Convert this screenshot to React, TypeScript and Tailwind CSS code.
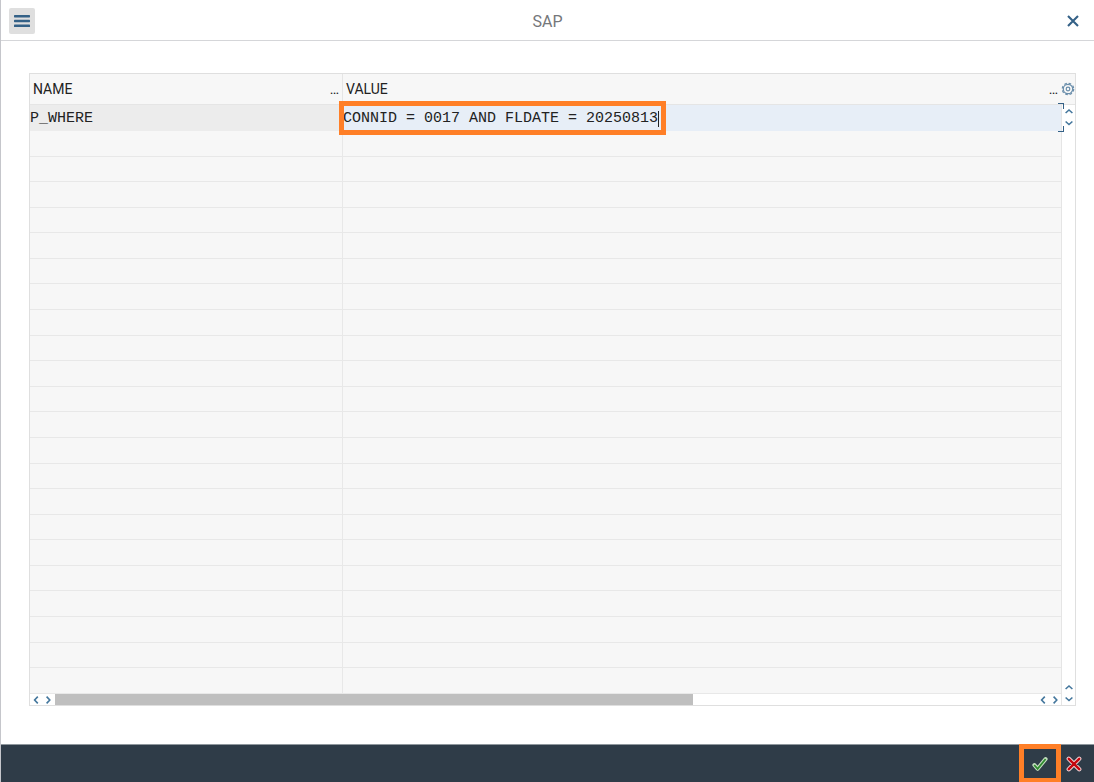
import { useState } from "react";

type Direction = "up" | "down" | "left" | "right";

const chevrons: Record<Direction, string> = {
  up: "M2.6 8 L6 5 L9.4 8",
  down: "M2.6 4.5 L6 7.5 L9.4 4.5",
  left: "M7.8 2.6 L4.6 6 L7.8 9.4",
  right: "M4.6 2.6 L7.8 6 L4.6 9.4",
};

function ScrollButton({ direction }: { direction: Direction }) {
  return (
    <button type="button" aria-label={`Scroll ${direction}`} className="flex size-3 items-center justify-center">
      <svg viewBox="0 0 12 12" className="size-3" fill="none" stroke="#44779d" strokeWidth="1.6">
        <path d={chevrons[direction]} />
      </svg>
    </button>
  );
}

function GearIcon() {
  return (
    <svg viewBox="0 0 14 14" className="size-[14px] shrink-0" fill="none" stroke="#6a8eab">
      <circle cx="7" cy="7" r="4.7" strokeWidth="1.2" />
      <circle cx="7" cy="7" r="5.7" strokeWidth="1.2" strokeDasharray="2.6 1.877" />
      <circle cx="7" cy="7" r="1.8" strokeWidth="1.2" />
    </svg>
  );
}

const emptyRows = Array.from({ length: 22 }, (_, i) => i);

export default function App() {
  const [value, setValue] = useState("CONNID = 0017 AND FLDATE = 20250813");

  return (
    <div className="flex min-h-screen flex-col border-l border-[#c5c6cb] bg-white font-['Roboto',sans-serif] text-[#222]">
      <header className="flex h-[41px] shrink-0 items-center justify-between border-b border-[#d5d6d9] pt-[2px] pr-3 pl-2">
        <button
          type="button"
          aria-label="Menu"
          className="flex size-[26px] items-center justify-center rounded-[2px] bg-[#dfdfdf]"
        >
          <svg viewBox="0 0 16 12" className="h-3 w-4" fill="#346187">
            <rect y="0" width="16" height="2.4" rx="0.6" />
            <rect y="4.8" width="16" height="2.4" rx="0.6" />
            <rect y="9.6" width="16" height="2.4" rx="0.6" />
          </svg>
        </button>
        <h1 className="pt-px text-[16px] leading-5 text-[#75777a]">SAP</h1>
        <button type="button" aria-label="Close" className="flex h-[26px] w-[22px] items-center justify-end pr-[3px]">
          <svg viewBox="0 0 12 12" className="size-3" fill="none" stroke="#346187" strokeWidth="2.1">
            <path d="M1 1 L11 11 M11 1 L1 11" />
          </svg>
        </button>
      </header>

      <main className="mt-8 mr-[18px] mb-[38px] ml-7 grid flex-1 grid-cols-[minmax(0,1fr)_14px] border border-[#dfdfdf]">
        <div className="grid grid-rows-[1fr_11px]">
          <table className="w-full table-fixed border-separate border-spacing-0 bg-[#f7f7f7]">
            <colgroup>
              <col className="w-[313px]" />
              <col />
            </colgroup>
            <thead>
              <tr className="h-[31px] text-left text-[14px] leading-5">
                <th className="border-r border-b border-[#e5e5e5] p-0 px-[3px] font-normal">
                  <span className="flex justify-between">
                    <span>NAME</span>
                    <span>…</span>
                  </span>
                </th>
                <th className="border-b border-[#e5e5e5] p-0 px-[3px] font-normal">
                  <span className="flex justify-between">
                    <span>VALUE</span>
                    <span>…</span>
                  </span>
                </th>
              </tr>
            </thead>
            <tbody>
              <tr className="h-[26px] font-['Liberation_Mono',monospace] text-[15px] leading-5">
                <td className="border-r border-[#e5e5e5] bg-[#ececec] p-0 pt-[2px]">P_WHERE</td>
                <td className="relative bg-[#e7eef7] p-0 pt-[2px]">
                  <div className="flex h-5 items-center">
                    <input
                      aria-label="P_WHERE value"
                      value={value}
                      onChange={(e) => setValue(e.target.value)}
                      className="field-sizing-content h-5 bg-transparent p-0 outline-none"
                    />
                    <span className="h-4 w-px bg-[#222]" />
                  </div>
                  <div className="pointer-events-none absolute -top-1 -left-1 h-[34px] w-[327px] border-5 border-[#ff7f27]" />
                  <div className="pointer-events-none absolute -top-[2px] -right-[3px] size-[6px] border-t border-r border-[#346187]" />
                  <div className="pointer-events-none absolute -right-[3px] -bottom-px size-[6px] border-r border-b border-[#346187]" />
                </td>
              </tr>
              {emptyRows.map((row) => (
                <tr key={row}>
                  <td className="border-r border-b border-[#e8e8e8] p-0" />
                  <td className="border-b border-[#e8e8e8] p-0" />
                </tr>
              ))}
            </tbody>
          </table>
          <div className="flex h-[11px] items-center">
            <ScrollButton direction="left" />
            <ScrollButton direction="right" />
            <div className="ml-px h-full flex-1">
              <div className="h-full w-[65%] bg-[#bfbfbf]" />
            </div>
            <ScrollButton direction="left" />
            <ScrollButton direction="right" />
          </div>
        </div>
        <div className="flex flex-col">
          <button
            type="button"
            aria-label="Table settings"
            className="flex h-[31px] items-center justify-center border-b border-[#e5e5e5] bg-[#f7f7f7]"
          >
            <GearIcon />
          </button>
          <div className="flex flex-1 flex-col items-center justify-between border-l border-[#e5e5e5]">
            <div>
              <ScrollButton direction="up" />
              <ScrollButton direction="down" />
            </div>
            <div>
              <ScrollButton direction="up" />
              <ScrollButton direction="down" />
            </div>
          </div>
        </div>
      </main>

      <footer className="flex h-[38px] shrink-0 items-center justify-end gap-1 border-t border-[#8f979d] bg-[#2f3c48] pr-[5px]">
        <div className="relative">
          <button type="button" aria-label="Continue" className="flex size-[30px] items-center justify-center">
            <svg viewBox="0 0 16 16" className="size-4" fill="none">
              <path d="M2.4 9 L5.6 12.8 L13.6 3" stroke="#c5dfc0" strokeWidth="4" strokeLinejoin="round" strokeLinecap="round" />
              <path d="M2.2 9 L5.6 12.8 L13.6 3" stroke="#2f8a2f" strokeWidth="1.8" />
            </svg>
          </button>
          <div className="pointer-events-none absolute -top-[5px] -left-[6px] h-[39px] w-[42px] border-5 border-[#ff7f27]" />
        </div>
        <button type="button" aria-label="Cancel" className="flex size-[30px] items-center justify-center">
          <svg viewBox="0 0 16 16" className="size-4" fill="none" strokeLinecap="round">
            <path d="M2.8 2.8 L13.2 13.2 M13.2 2.8 L2.8 13.2" stroke="#f0d4d6" strokeWidth="4.4" />
            <path d="M2.8 2.8 L13.2 13.2 M13.2 2.8 L2.8 13.2" stroke="#c4060f" strokeWidth="2.4" />
          </svg>
        </button>
      </footer>
    </div>
  );
}
